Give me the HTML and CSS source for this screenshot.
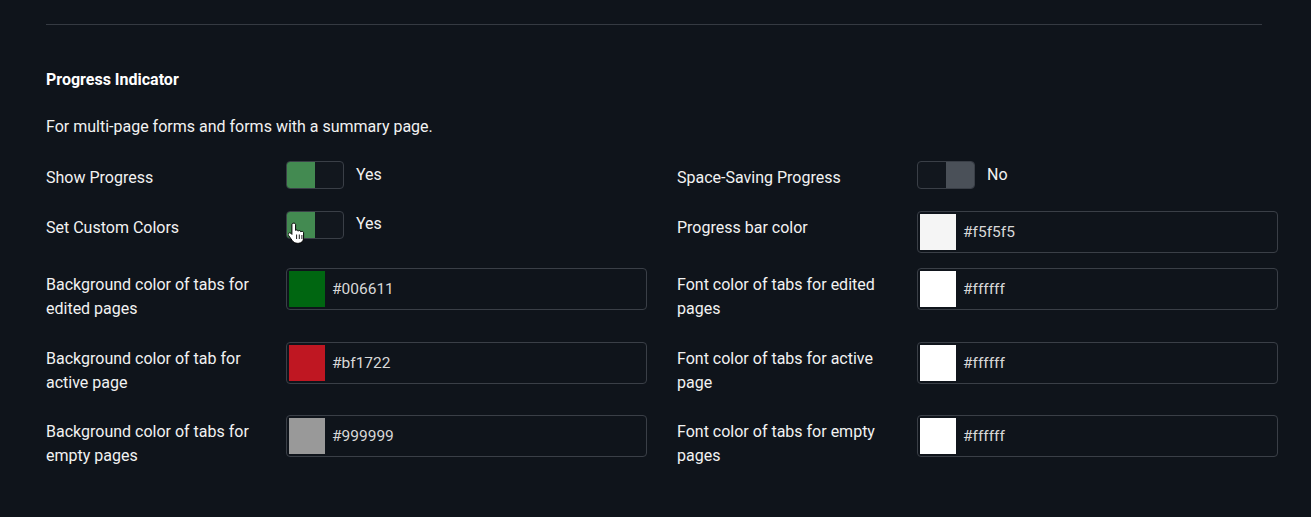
FILE: index.html
```html
<!DOCTYPE html>
<html lang="en">
<head>
<meta charset="utf-8">
<title>Progress Indicator</title>
<link rel="stylesheet" href="styles.css">
</head>
<body>
<div class="page">
  <hr class="divider">
  <h3 class="heading">Progress Indicator</h3>
  <p class="desc">For multi-page forms and forms with a summary page.</p>
  <div class="fields">
    <div class="field">
      <div class="label">Show Progress</div>
      <div class="control">
        <span class="toggle on"><span class="knob"></span><span class="rest"></span></span>
        <span class="state">Yes</span>
      </div>
    </div>
    <div class="field">
      <div class="label">Space-Saving Progress</div>
      <div class="control">
        <span class="toggle off"><span class="rest"></span><span class="knob"></span></span>
        <span class="state">No</span>
      </div>
    </div>

    <div class="field">
      <div class="label">Set Custom Colors</div>
      <div class="control">
        <span class="toggle on cursor-host"><span class="knob"></span><span class="rest"></span>
          <svg class="cursor" viewBox="0 0 17 24" width="17" height="24">
            <path d="M5.5 1.2c-.9 0-1.6.7-1.6 1.6v9.6l-.9-1c-.7-.7-1.8-.8-2.4-.1-.6.6-.5 1.5 0 2.2l3.6 5c1.3 1.8 3 2.8 5.2 2.8h1c3 0 5.2-2.3 5.2-5.2v-5.200c0-.9-.7-1.5-1.5-1.5-.5 0-.9.2-1.2.5-.1-.8-.7-1.4-1.5-1.4-.5 0-1 .3-1.2.7-.2-.7-.8-1.2-1.5-1.2-.4 0-.8.2-1.1.4V2.8c0-.9-.7-1.6-1.6-1.6z" fill="#fff" stroke="#000" stroke-width="1"/>
            <path d="M8.6 12.5v4.5M11.3 12.5v4.5M13.9 13v4" stroke="#000" stroke-width=".9" fill="none"/>
          </svg>
        </span>
        <span class="state">Yes</span>
      </div>
    </div>
    <div class="field">
      <div class="label">Progress bar color</div>
      <div class="control">
        <div class="color-input"><span class="swatch" style="background:#f5f5f5"></span><span class="value">#f5f5f5</span></div>
      </div>
    </div>

    <div class="field">
      <div class="label">Background color of tabs for edited pages</div>
      <div class="control">
        <div class="color-input"><span class="swatch" style="background:#006611"></span><span class="value">#006611</span></div>
      </div>
    </div>
    <div class="field">
      <div class="label">Font color of tabs for edited pages</div>
      <div class="control">
        <div class="color-input"><span class="swatch" style="background:#ffffff"></span><span class="value">#ffffff</span></div>
      </div>
    </div>

    <div class="field">
      <div class="label">Background color of tab for active page</div>
      <div class="control">
        <div class="color-input"><span class="swatch" style="background:#bf1722"></span><span class="value">#bf1722</span></div>
      </div>
    </div>
    <div class="field">
      <div class="label">Font color of tabs for active page</div>
      <div class="control">
        <div class="color-input"><span class="swatch" style="background:#ffffff"></span><span class="value">#ffffff</span></div>
      </div>
    </div>

    <div class="field">
      <div class="label">Background color of tabs for empty pages</div>
      <div class="control">
        <div class="color-input"><span class="swatch" style="background:#999999"></span><span class="value">#999999</span></div>
      </div>
    </div>
    <div class="field">
      <div class="label">Font color of tabs for empty pages</div>
      <div class="control">
        <div class="color-input"><span class="swatch" style="background:#ffffff"></span><span class="value">#ffffff</span></div>
      </div>
    </div>
  </div>
</div>
</body>
</html>
```

FILE: styles.css
```css
html, body {
  margin: 0;
  padding: 0;
  background: #0f141b;
}
body {
  font-family: Roboto, "Liberation Sans", sans-serif;
  color: #f2f2f2;
  font-size: 16px;
  width: 1311px;
  height: 517px;
  overflow: hidden;
}
.page {
  padding: 0 34px 0 46px;
}
.divider {
  margin: 24px 15px 0 0;
  border: 0;
  height: 1px;
  background: #353a42;
}
.heading {
  margin: 45px 0 0;
  font-size: 16px;
  font-weight: 700;
  line-height: 20px;
  color: #ffffff;
}
.desc {
  margin: 27px 0 0;
  line-height: 20px;
  font-size: 16px;
}
.fields {
  margin-top: 24px;
  display: grid;
  grid-template-columns: 601px 601px;
  column-gap: 30px;
  row-gap: 15.5px;
}
.field {
  display: flex;
  align-items: flex-start;
}
.label {
  width: 240px;
  flex: none;
  padding: 5px 20px 5px 0;
  box-sizing: border-box;
  line-height: 24px;
}
.control {
  flex: 1;
  display: flex;
  align-items: center;
  gap: 12px;
}
.toggle {
  position: relative;
  display: flex;
  width: 58px;
  height: 28px;
  box-sizing: border-box;
  border: 1px solid #3a3f47;
  border-radius: 4px;
  overflow: visible;
  background: #12171e;
}
.toggle .knob, .toggle .rest {
  width: 50%;
  height: 100%;
}
.toggle.on .knob {
  background: #438a51;
  border-radius: 3px 0 0 3px;
}
.toggle.off .knob {
  background: #4a5058;
  border-radius: 0 3px 3px 0;
}
.state {
  font-size: 16px;
  line-height: 20px;
  margin-top: -1px;
}
.cursor {
  position: absolute;
  left: 1px;
  top: 10px;
}
.color-input {
  width: 100%;
  height: 42px;
  box-sizing: border-box;
  border: 1px solid #3a3f47;
  border-radius: 4px;
  background: #0f141b;
  display: flex;
  align-items: center;
  padding: 2px;
  gap: 7px;
}
.swatch {
  width: 36px;
  height: 36px;
  flex: none;
}
.value {
  color: #d8d8d8;
  font-size: 15.5px;
}
```
